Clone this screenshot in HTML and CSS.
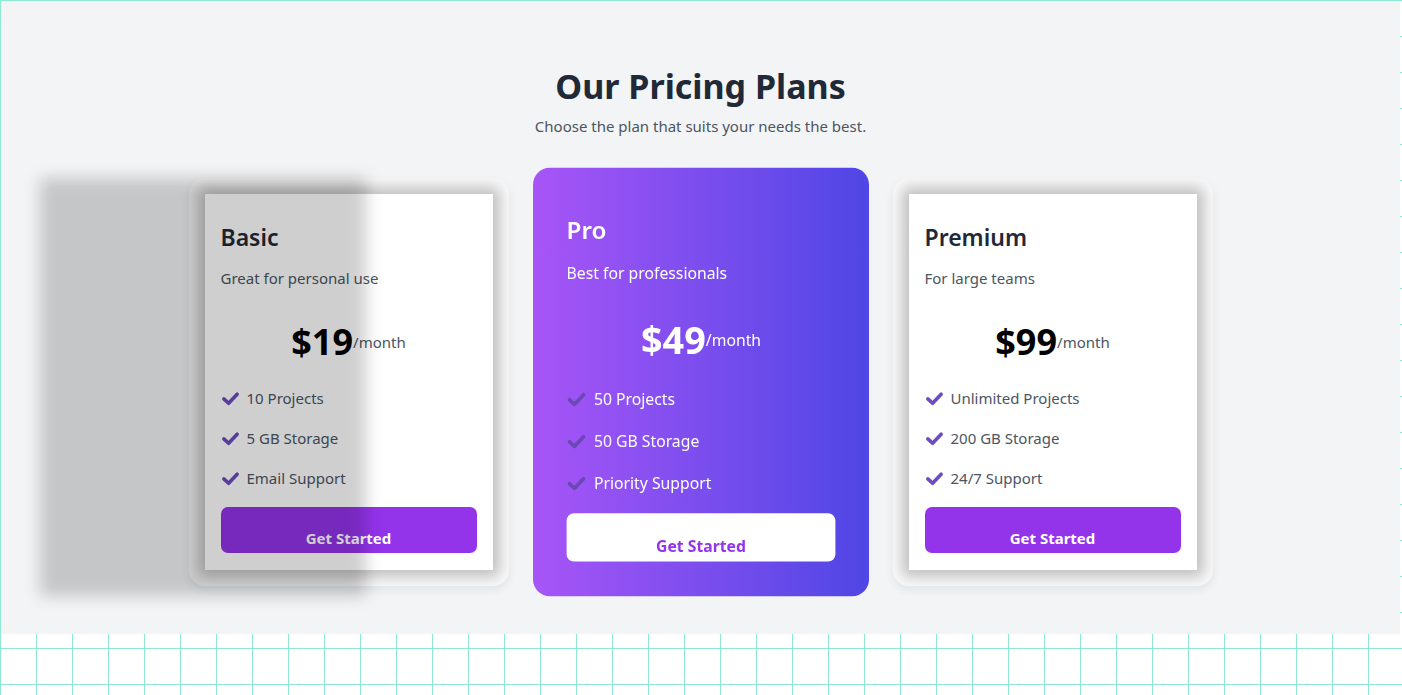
FILE: index.html
```html
<!DOCTYPE html>
<html lang="en">
<head>
<meta charset="utf-8">
<title>Our Pricing Plans</title>
<link rel="stylesheet" href="styles.css">
</head>
<body>
<section class="pricing">
  <h2 class="pricing-title">Our Pricing Plans</h2>
  <p class="pricing-sub">Choose the plan that suits your needs the best.</p>
  <div class="plans">
    <div class="plan plan-light">
      <div class="plan-inner">
        <h3 class="plan-name">Basic</h3>
        <p class="plan-desc">Great for personal use</p>
        <div class="plan-price"><span class="amount">$19</span><span class="per">/month</span></div>
        <ul class="features">
          <li><svg class="check" viewBox="0 0 20 16"><polyline points="3,9 8,13.5 17,4"/></svg>10 Projects</li>
          <li><svg class="check" viewBox="0 0 20 16"><polyline points="3,9 8,13.5 17,4"/></svg>5 GB Storage</li>
          <li><svg class="check" viewBox="0 0 20 16"><polyline points="3,9 8,13.5 17,4"/></svg>Email Support</li>
        </ul>
        <button class="btn btn-purple">Get Started</button>
      </div>
    </div>
    <div class="plan plan-pro">
      <h3 class="plan-name">Pro</h3>
      <p class="plan-desc">Best for professionals</p>
      <div class="plan-price"><span class="amount">$49</span><span class="per">/month</span></div>
      <ul class="features">
        <li><svg class="check" viewBox="0 0 20 16"><polyline points="3,9 8,13.5 17,4"/></svg>50 Projects</li>
        <li><svg class="check" viewBox="0 0 20 16"><polyline points="3,9 8,13.5 17,4"/></svg>50 GB Storage</li>
        <li><svg class="check" viewBox="0 0 20 16"><polyline points="3,9 8,13.5 17,4"/></svg>Priority Support</li>
      </ul>
      <button class="btn btn-white">Get Started</button>
    </div>
    <div class="plan plan-light">
      <div class="plan-inner">
        <h3 class="plan-name">Premium</h3>
        <p class="plan-desc">For large teams</p>
        <div class="plan-price"><span class="amount">$99</span><span class="per">/month</span></div>
        <ul class="features">
          <li><svg class="check" viewBox="0 0 20 16"><polyline points="3,9 8,13.5 17,4"/></svg>Unlimited Projects</li>
          <li><svg class="check" viewBox="0 0 20 16"><polyline points="3,9 8,13.5 17,4"/></svg>200 GB Storage</li>
          <li><svg class="check" viewBox="0 0 20 16"><polyline points="3,9 8,13.5 17,4"/></svg>24/7 Support</li>
        </ul>
        <button class="btn btn-purple">Get Started</button>
      </div>
    </div>
  </div>
  <div class="shade"></div>
</section>
</body>
</html>
```

FILE: styles.css
```css
* { box-sizing: border-box; }

html, body { margin: 0; padding: 0; }

body {
  height: 695px;
  overflow: hidden;
  font-family: "Noto Sans", "Open Sans", sans-serif;
  background-color: #ffffff;
  background-image:
    linear-gradient(to right, #8fe9d2 1px, transparent 1px),
    linear-gradient(to bottom, #8fe9d2 1px, transparent 1px);
  background-size: 36px 36px;
}

.pricing {
  position: relative;
  margin: 1px 2px 0 1px;
  height: 633px;
  background: #f3f4f6;
  padding-top: 65px;
  text-align: center;
}

.pricing-title {
  margin: 0;
  font-size: 34px;
  line-height: 40px;
  font-weight: 700;
  color: #1f2937;
}

.pricing-sub {
  margin: 8px 0 0;
  font-size: 15px;
  line-height: 24px;
  color: #4b5563;
}

.plans {
  display: flex;
  justify-content: center;
  gap: 32px;
  margin-top: 40px;
  text-align: left;
}

.plan {
  width: 320px;
  height: 408px;
  border-radius: 16px;
}

.plan-light {
  padding: 16px;
  background: #fbfbfb;
  overflow: hidden;
  box-shadow: 0 4px 10px rgba(0, 0, 0, 0.07);
}

.plan-inner {
  height: 100%;
  background: #ffffff;
  padding: 27px 16px 17px;
  box-shadow: 0 0 14px 7px rgba(0, 0, 0, 0.24);
}

.plan-pro {
  padding: 43px 32px 33px;
  background: linear-gradient(to right, #a855f7, #4f46e5);
  color: #ffffff;
  transform: scale(1.05);
}

.plan-name {
  margin: 0;
  font-size: 23px;
  line-height: 32px;
  font-weight: 600;
  color: #1f2937;
}

.plan-desc {
  margin: 13px 0 0;
  font-size: 15px;
  line-height: 24px;
  color: #4b5563;
}

.plan-price {
  margin-top: 32px;
  height: 40px;
  display: flex;
  justify-content: center;
  align-items: center;
}

.amount {
  font-size: 36px;
  line-height: 40px;
  font-weight: 700;
  color: #000000;
}

.per {
  font-size: 15px;
  line-height: 24px;
  color: #4b5563;
}

.features {
  list-style: none;
  margin: 24px 0 0;
  padding: 0;
  display: flex;
  flex-direction: column;
  gap: 16px;
}

.features li {
  display: flex;
  align-items: center;
  gap: 7px;
  font-size: 15px;
  line-height: 24px;
  color: #4b5563;
}

.check {
  width: 19px;
  height: 16px;
  flex: none;
  fill: none;
  stroke: #6d4cc0;
  stroke-width: 3.8;
  stroke-linecap: round;
  stroke-linejoin: round;
}

.btn {
  display: block;
  width: 100%;
  margin-top: 17px;
  padding: 19px 0 3px;
  border: 0;
  border-radius: 7px;
  font-family: inherit;
  font-size: 15px;
  line-height: 24px;
  font-weight: 700;
  text-align: center;
}

.btn-purple {
  background: #9333ea;
  color: #ffffff;
}

.btn-white {
  background: #ffffff;
  color: #9333ea;
}

.plan-pro .plan-name,
.plan-pro .plan-desc,
.plan-pro .amount,
.plan-pro .per,
.plan-pro .features li {
  color: #ffffff;
}

.plan-pro .check {
  stroke: rgba(75, 65, 140, 0.6);
}

.shade {
  position: absolute;
  left: 39px;
  top: 177px;
  width: 326px;
  height: 418px;
  background: rgba(0, 0, 0, 0.19);
  filter: blur(8px);
  pointer-events: none;
}
```
